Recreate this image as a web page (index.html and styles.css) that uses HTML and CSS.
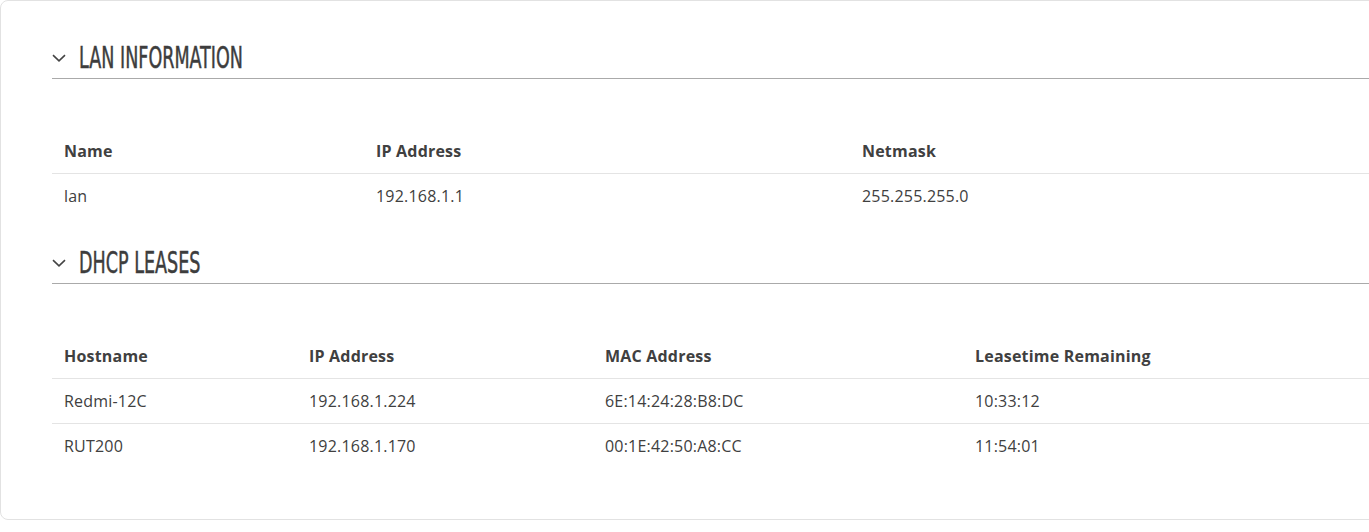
FILE: index.html
```html
<!DOCTYPE html>
<html>
<head>
<meta charset="utf-8">
<link rel="stylesheet" href="styles.css">
</head>
<body>
<div class="card">
  <section class="section">
    <div class="heading">
      <svg class="chevron" width="14" height="8" viewBox="0 0 14 8"><path d="M1 1.2 L7 6.8 L13 1.2" fill="none" stroke="#444" stroke-width="1.6"/></svg>
      <span class="title">LAN INFORMATION</span>
    </div>
    <table class="tbl">
      <colgroup><col class="c312"><col class="c486"><col></colgroup>
      <thead><tr><th>Name</th><th>IP Address</th><th>Netmask</th></tr></thead>
      <tbody><tr><td>lan</td><td>192.168.1.1</td><td>255.255.255.0</td></tr></tbody>
    </table>
  </section>
  <section class="section">
    <div class="heading">
      <svg class="chevron" width="14" height="8" viewBox="0 0 14 8"><path d="M1 1.2 L7 6.8 L13 1.2" fill="none" stroke="#444" stroke-width="1.6"/></svg>
      <span class="title">DHCP LEASES</span>
    </div>
    <table class="tbl">
      <colgroup><col class="c245"><col class="c296"><col class="c370"><col></colgroup>
      <thead><tr><th>Hostname</th><th>IP Address</th><th>MAC Address</th><th>Leasetime Remaining</th></tr></thead>
      <tbody>
        <tr><td>Redmi-12C</td><td>192.168.1.224</td><td>6E:14:24:28:B8:DC</td><td>10:33:12</td></tr>
        <tr><td>RUT200</td><td>192.168.1.170</td><td>00:1E:42:50:A8:CC</td><td>11:54:01</td></tr>
      </tbody>
    </table>
  </section>
</div>
</body>
</html>
```

FILE: styles.css
```css
html, body {
  margin: 0;
  padding: 0;
  background: #fff;
  overflow: hidden;
}
body {
  font-family: "Open Sans", "Liberation Sans", sans-serif;
  font-size: 16px;
  letter-spacing: 0.2px;
  color: #404040;
}
.card {
  box-sizing: border-box;
  width: 1420px;
  border: 1px solid #e2e2e2;
  border-radius: 8px;
  padding: 12px 0 51px 51px;
  background: #fff;
}
.heading {
  display: flex;
  align-items: center;
  height: 36px;
  padding-top: 24px;
  padding-bottom: 5px;
  border-bottom: 1px solid #aaaaaa;
}
.chevron {
  display: block;
  margin-top: 6px;
  margin-right: 13px;
  flex: none;
}
.title {
  display: inline-block;
  font-family: "DejaVu Sans Condensed", "DejaVu Sans", sans-serif;
  font-stretch: condensed;
  font-size: 31px;
  line-height: 36px;
  letter-spacing: 0;
  color: #3d3d3d;
  -webkit-text-stroke: 0.5px #3d3d3d;
  transform: translateY(2px) scaleX(0.63);
  transform-origin: left center;
  white-space: nowrap;
}
.tbl {
  width: 100%;
  border-collapse: collapse;
  margin-top: 50px;
  table-layout: fixed;
}
.c312 { width: 312px; }
.c486 { width: 486px; }
.c245 { width: 245px; }
.c296 { width: 296px; }
.c370 { width: 370px; }
.tbl th, .tbl td {
  text-align: left;
  padding: 0 12px;
  height: 44px;
  line-height: 22px;
  white-space: nowrap;
}
.tbl th {
  font-weight: 700;
  border-bottom: 1px solid #e4e4e4;
}
.tbl tbody tr + tr td {
  border-top: 1px solid #e4e4e4;
}
```
